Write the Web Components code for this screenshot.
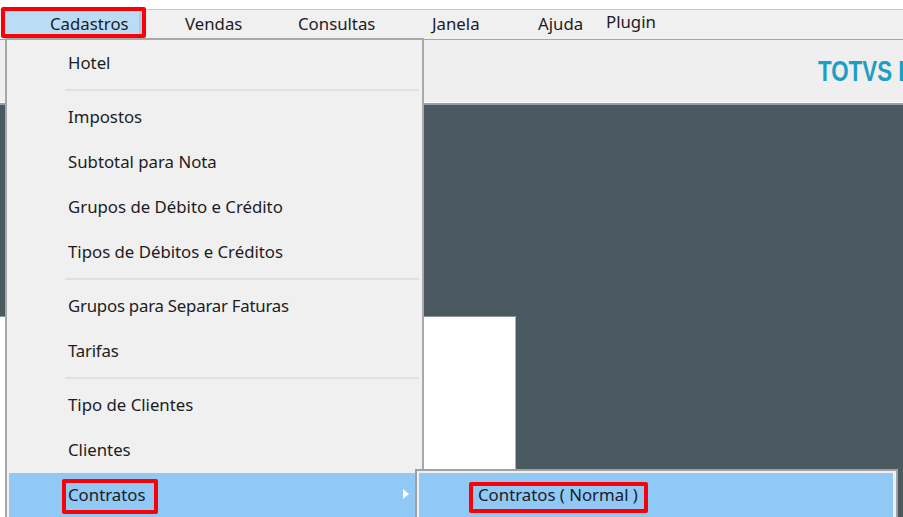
<!DOCTYPE html>
<html lang="pt">
<head>
<meta charset="utf-8">
<title>Cadastros</title>
<style>
	html, body { margin: 0; height: 100%; overflow: hidden; background: #ffffff; }
	body { font-family: "Noto Sans", "Open Sans", sans-serif; }
</style>
</head>
<body>
<app-window>
	<menu-bar slot="bar">
		<bar-item style="width:145px" text-left="49" marked>Cadastros</bar-item>
		<bar-item style="width:113px" text-left="39">Vendas</bar-item>
		<bar-item style="width:134px" text-left="39">Consultas</bar-item>
		<bar-item style="width:106px" text-left="39">Janela</bar-item>
		<bar-item style="width:107px" text-left="39">Ajuda</bar-item>
		<bar-item style="width:80px" text-left="0" raised>Plugin</bar-item>
	</menu-bar>
	<drop-menu slot="menu">
		<menu-row>Hotel</menu-row>
		<menu-sep></menu-sep>
		<menu-row>Impostos</menu-row>
		<menu-row>Subtotal para Nota</menu-row>
		<menu-row>Grupos de Débito e Crédito</menu-row>
		<menu-row>Tipos de Débitos e Créditos</menu-row>
		<menu-sep></menu-sep>
		<menu-row style="letter-spacing:-.22px">Grupos para Separar Faturas</menu-row>
		<menu-row style="letter-spacing:-.2px">Tarifas</menu-row>
		<menu-sep></menu-sep>
		<menu-row>Tipo de Clientes</menu-row>
		<menu-row>Clientes</menu-row>
		<menu-row active marked arrow style="--mark-l:-6px;--mark-r:-13px;--mark-t:-4px;--mark-b:-8px">Contratos</menu-row>
	</drop-menu>
	<sub-menu slot="submenu">
		<menu-row active marked indent="59" style="--mark-l:-9px;--mark-r:-10px;--mark-t:-1px;--mark-b:-7px">Contratos ( Normal )</menu-row>
	</sub-menu>
</app-window>

<script>
class AppWindow extends HTMLElement {
	constructor() {
		super();
		this.attachShadow({ mode: 'open' });
		this.shadowRoot.innerHTML = `
			<style>
				:host { display: flex; flex-direction: column; position: relative; width: 903px; height: 517px; overflow: hidden; }
				.top { height: 9px; flex: none; background: #ffffff; }
				.toolbar {
					flex: none;
					height: 62px;
					background: #efefef;
					border-bottom: 1px solid #ffffff;
					display: flex;
					justify-content: flex-end;
					align-items: center;
					overflow: hidden;
				}
				.logo {
					flex: none;
					width: 85px;
					font: bold 29px "Liberation Sans", sans-serif;
					color: #1c9fc4;
					white-space: nowrap;
					line-height: 36px;
					transform: scaleX(.77);
					transform-origin: left center;
				}
				.desk { flex: 1; display: flex; flex-direction: column; background: #4b5a61; border-top: 2px solid #9a9fa1; }
				.dark { height: 211px; flex: none; }
				.sheet { flex: 1; width: 515px; background: #ffffff; border-top: 1px solid #8b9599; border-right: 1px solid #a9b0b3; }
				.menu { position: absolute; left: 5px; top: 38px; }
				.submenu { position: absolute; left: 415px; top: 469px; }
			</style>
			<div class="top"></div>
			<slot name="bar"></slot>
			<div class="toolbar"><div class="logo">TOTVS H</div></div>
			<div class="desk">
				<div class="dark"></div>
				<div class="sheet"></div>
			</div>
			<div class="menu"><slot name="menu"></slot></div>
			<div class="submenu"><slot name="submenu"></slot></div>
		`;
	}
}

class MenuBar extends HTMLElement {
	constructor() {
		super();
		this.attachShadow({ mode: 'open' });
		this.shadowRoot.innerHTML = `
			<style>
				:host {
					display: flex;
					flex: none;
					height: 29px;
					padding-left: 1px;
					background: #f0f0f0;
					border-top: 1px solid #c9c9c9;
					border-bottom: 1px solid #a6a6a6;
				}
			</style>
			<slot></slot>
		`;
	}
}

class BarItem extends HTMLElement {
	constructor() {
		super();
		this.attachShadow({ mode: 'open' });
		this.shadowRoot.innerHTML = `
			<style>
				:host { display: block; position: relative; flex: none; font-size: 16.8px; color: #1c1c24; }
				.label { position: absolute; top: 3px; line-height: 22px; white-space: nowrap; }
				:host([raised]) .label { top: 1px; }
				.mark {
					display: none;
					position: absolute;
					left: 0; top: -3px;
					width: 137px; height: 23px;
					border: 4px solid #fb0007;
					border-radius: 2px;
					background: linear-gradient(to right, #bbdcf5 134px, #a6cfec 134px);
				}
				:host([marked]) .mark { display: block; }
			</style>
			<div class="mark"></div>
			<span class="label"><slot></slot></span>
		`;
		this.shadowRoot.querySelector('.label').style.left = this.getAttribute('text-left') + 'px';
	}
}

class DropMenu extends HTMLElement {
	constructor() {
		super();
		this.attachShadow({ mode: 'open' });
		this.shadowRoot.innerHTML = `
			<style>
				:host {
					display: block;
					width: 411px;
					height: 480px;
					padding: 1px 2px 0 2px;
					background: #f0f0f0;
					border: 2px solid #a8a8a8;
					border-bottom: 0;
				}
			</style>
			<slot></slot>
		`;
	}
}

class SubMenu extends HTMLElement {
	constructor() {
		super();
		this.attachShadow({ mode: 'open' });
		this.shadowRoot.innerHTML = `
			<style>
				:host {
					display: block;
					width: 474px;
					height: 46px;
					padding: 2px 3px 0 2px;
					background: #f0f0f0;
					border: 2px solid #a0a0a0;
					border-bottom: 0;
				}
			</style>
			<slot></slot>
		`;
	}
}

class MenuRow extends HTMLElement {
	constructor() {
		super();
		this.attachShadow({ mode: 'open' });
		this.shadowRoot.innerHTML = `
			<style>
				:host {
					display: flex;
					align-items: center;
					position: relative;
					height: 43px;
					padding: 0 0 2px 59px;
					font-size: 16.8px;
					color: #1c1c24;
					white-space: nowrap;
				}
				:host([active]) { background: #90c8f6; }
				.label { position: relative; line-height: 23px; }
				:host([marked]) .label::before {
					content: "";
					position: absolute;
					left: var(--mark-l); right: var(--mark-r);
					top: var(--mark-t); bottom: var(--mark-b);
					border: 4px solid #fb0007;
					border-radius: 2px;
				}
				svg { display: none; position: absolute; left: 393px; top: 15px; }
				:host([arrow]) svg { display: block; }
			</style>
			<span class="label"><slot></slot></span>
			<svg width="8" height="12" viewBox="0 0 8 12"><path d="M1 1 L7 6 L1 11 Z" fill="#ffffff"/></svg>
		`;
		const indent = this.getAttribute('indent');
		if (indent) this.style.paddingLeft = indent + 'px';
	}
}

class MenuSep extends HTMLElement {
	constructor() {
		super();
		this.attachShadow({ mode: 'open' });
		this.shadowRoot.innerHTML = `
			<style>
				:host { display: block; height: 9px; padding: 3px 1px 0 56px; box-sizing: border-box; }
				div { height: 2px; background: #e0e0e0; }
			</style>
			<div></div>
		`;
	}
}

customElements.define('app-window', AppWindow);
customElements.define('menu-bar', MenuBar);
customElements.define('bar-item', BarItem);
customElements.define('drop-menu', DropMenu);
customElements.define('sub-menu', SubMenu);
customElements.define('menu-row', MenuRow);
customElements.define('menu-sep', MenuSep);
</script>
</body>
</html>
